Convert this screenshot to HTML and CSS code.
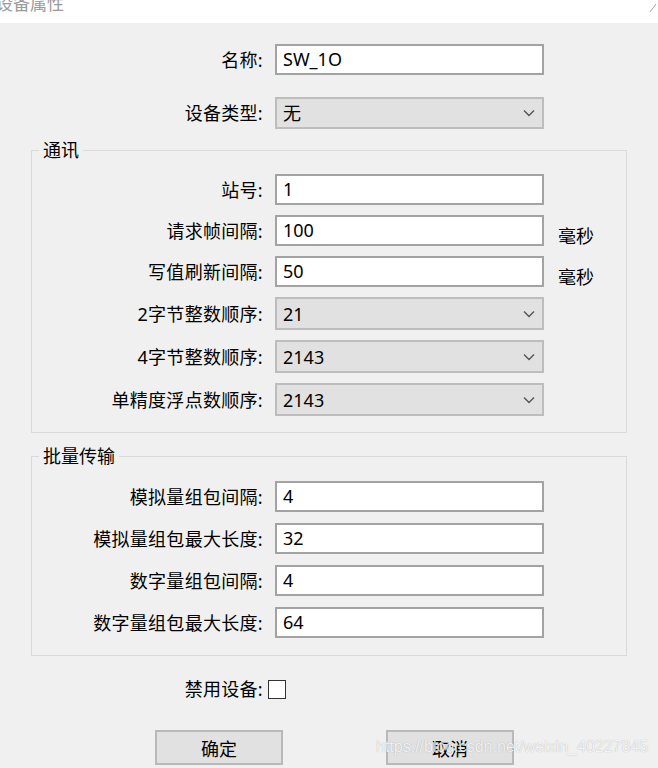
FILE: index.html
```html
<!DOCTYPE html>
<html lang="zh">
<head>
<meta charset="utf-8">
<title>设备属性</title>
<link rel="stylesheet" href="styles.css">
</head>
<body>
<div class="titlebar">
  <span class="title">设备属性</span>
  <svg class="close" width="8" height="12" viewBox="0 0 8 12"><line x1="1" y1="11" x2="7" y2="3" stroke="#a8a8a8" stroke-width="1"/></svg>
</div>
<div class="dialog">
  <div class="row"><span class="lbl">名称:</span><div class="input">SW_1O</div></div>
  <div class="row row-gap"><span class="lbl">设备类型:</span><div class="select"><span>无</span><svg class="chev" width="12" height="8" viewBox="0 0 12 8"><polyline points="1,1.5 6,6.5 11,1.5" fill="none" stroke="#555" stroke-width="1.4"/></svg></div></div>

  <fieldset class="group g1">
    <legend>通讯</legend>
    <div class="rows">
      <div class="row"><span class="lbl">站号:</span><div class="input">1</div></div>
      <div class="row"><span class="lbl">请求帧间隔:</span><div class="input">100</div><span class="unit">毫秒</span></div>
      <div class="row"><span class="lbl">写值刷新间隔:</span><div class="input">50</div><span class="unit">毫秒</span></div>
      <div class="row"><span class="lbl">2字节整数顺序:</span><div class="select"><span>21</span><svg class="chev" width="12" height="8" viewBox="0 0 12 8"><polyline points="1,1.5 6,6.5 11,1.5" fill="none" stroke="#555" stroke-width="1.4"/></svg></div></div>
      <div class="row"><span class="lbl">4字节整数顺序:</span><div class="select"><span>2143</span><svg class="chev" width="12" height="8" viewBox="0 0 12 8"><polyline points="1,1.5 6,6.5 11,1.5" fill="none" stroke="#555" stroke-width="1.4"/></svg></div></div>
      <div class="row"><span class="lbl">单精度浮点数顺序:</span><div class="select"><span>2143</span><svg class="chev" width="12" height="8" viewBox="0 0 12 8"><polyline points="1,1.5 6,6.5 11,1.5" fill="none" stroke="#555" stroke-width="1.4"/></svg></div></div>
    </div>
  </fieldset>

  <fieldset class="group g2">
    <legend>批量传输</legend>
    <div class="rows">
      <div class="row"><span class="lbl">模拟量组包间隔:</span><div class="input">4</div></div>
      <div class="row"><span class="lbl">模拟量组包最大长度:</span><div class="input">32</div></div>
      <div class="row"><span class="lbl">数字量组包间隔:</span><div class="input">4</div></div>
      <div class="row"><span class="lbl">数字量组包最大长度:</span><div class="input">64</div></div>
    </div>
  </fieldset>

  <div class="check-row"><span class="lbl">禁用设备:</span><span class="checkbox"></span></div>

  <div class="buttons">
    <div class="btn">确定</div>
    <div class="btn">取消</div>
  </div>
</div>
<div class="watermark">https://blog.csdn.net/weixin_40227845</div>
</body>
</html>
```
FILE: styles.css
```css
* { box-sizing: border-box; }
html, body { margin: 0; padding: 0; }
body {
  width: 658px;
  height: 768px;
  overflow: hidden;
  position: relative;
  background: #f0f0f0;
  color: #000;
  font-family: "Noto Sans", "Noto Sans CJK SC", sans-serif;
  font-size: 18px;
}
.titlebar {
  height: 23px;
  background: #fff;
  display: flex;
  justify-content: space-between;
  align-items: flex-start;
  overflow: hidden;
}
.title {
  color: #9a9a9a;
  font-size: 17px;
  line-height: 17px;
  margin-top: -5px;
  margin-left: -4px;
}
.close { margin-top: 1px; margin-right: 1px; }
.dialog { padding: 21px 31px 0 31px; }
.row {
  display: grid;
  grid-template-columns: 232px 269px auto;
  column-gap: 12px;
  align-items: center;
}
.row-gap { margin-top: 22px; }
.lbl {
  text-align: right;
  line-height: 24px;
  white-space: nowrap;
  letter-spacing: 0.3px;
}
.input {
  height: 31px;
  background: #fff;
  border: 2px solid #a3a3a3;
  padding: 0 6px;
  line-height: 27px;
}
.select {
  height: 32px;
  background: #e1e1e1;
  border: 2px solid #bdbdbd;
  padding: 0 7px 0 6px;
  display: flex;
  justify-content: space-between;
  align-items: center;
  line-height: 28px;
}
.unit {
  margin-left: 2px;
  line-height: 24px;
  align-self: end;
  margin-bottom: -2px;
}
.group {
  margin: 0;
  border: 1px solid #dadada;
  padding: 0;
  min-width: 0;
}
.group legend {
  margin-left: 7px;
  padding: 0 4px;
  line-height: 24px;
}
.group .row { grid-template-columns: 231px 269px auto; }
.g1 { margin-top: 9px; padding: 12px 0 16px 0; }
.g1 .rows { gap: 10px; }
.g1 .select { height: 33px; }
.g2 { margin-top: 11px; padding: 13px 0 17px 0; }
.rows { display: flex; flex-direction: column; gap: 11px; }
.check-row {
  margin-top: 21px;
  display: flex;
  align-items: center;
  gap: 5px;
}
.check-row .lbl { width: 232px; }
.checkbox {
  width: 18px;
  height: 19px;
  background: #fff;
  border: 1.5px solid #333;
}
.buttons {
  margin-top: 29px;
  padding-left: 124px;
  display: flex;
  gap: 103px;
}
.btn {
  width: 128px;
  height: 35px;
  background: #e1e1e1;
  border: 2px solid #b9b9b9;
  display: flex;
  align-items: center;
  justify-content: center;
}
.watermark {
  position: absolute;
  left: 376px;
  top: 738px;
  font-family: "Liberation Sans", sans-serif;
  font-size: 16px;
  color: rgba(255, 255, 255, 0.85);
  text-shadow: 0 0 1px rgba(0, 0, 0, 0.3);
  white-space: nowrap;
}
```
